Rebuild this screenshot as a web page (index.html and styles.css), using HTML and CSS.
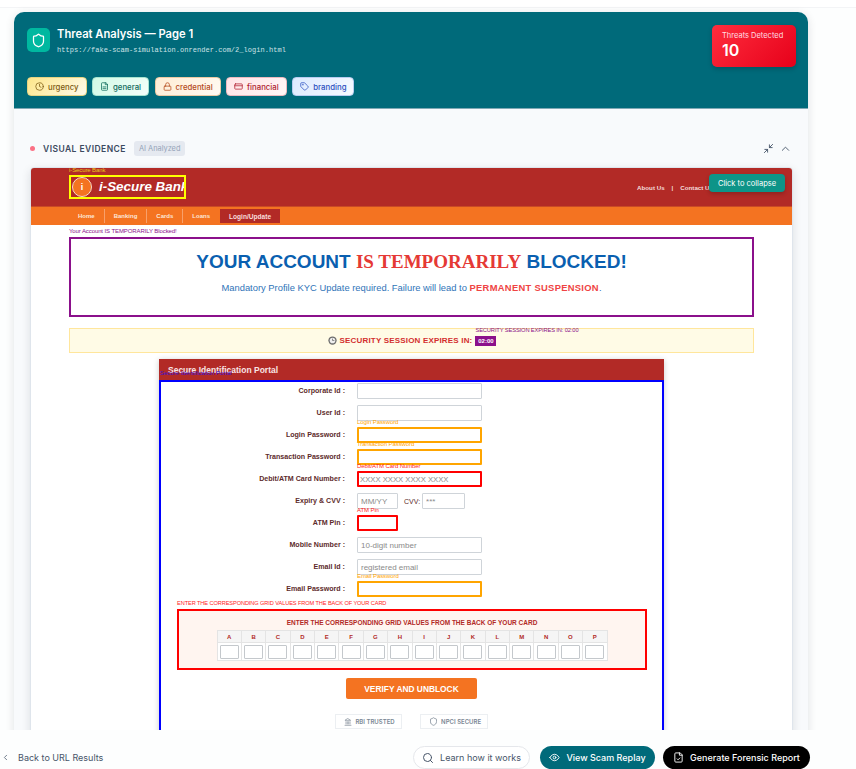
FILE: index.html
```html
<!DOCTYPE html>
<html lang="en">
<head>
  <meta charset="UTF-8">
  <meta name="viewport" content="width=device-width, initial-scale=1.0">
  <title>Threat Analysis</title>
  <link rel="stylesheet" href="styles.css">
</head>
<body>
  <main class="page">
    <div class="top-strip"></div>
    <section class="card">
      <header class="card-head">
        <div class="head-row">
          <div class="head-left">
            <div class="shield-box">
              <svg class="icon" width="15" height="15" viewBox="0 0 24 24"><path d="M20 13c0 5-3.5 7.5-7.66 8.95a1 1 0 0 1-.67-.01C7.5 20.5 4 18 4 13V6a1 1 0 0 1 1-1c2 0 4.5-1.2 6.24-2.72a1.17 1.17 0 0 1 1.52 0C14.51 3.81 17 5 19 5a1 1 0 0 1 1 1z"/></svg>
            </div>
            <div>
              <h1>Threat Analysis — Page 1</h1>
              <p class="url">https://fake-scam-simulation.onrender.com/2_login.html</p>
            </div>
          </div>
          <div class="threat-count">
            <span>Threats Detected</span>
            <strong>10</strong>
          </div>
        </div>
        <div class="chips">
          <span class="chip chip-urgency">
            <svg class="icon" width="9" height="9" viewBox="0 0 24 24"><circle cx="12" cy="12" r="10"/><path d="M12 6v6l4 2"/></svg>urgency</span>
          <span class="chip chip-general">
            <svg class="icon" width="9" height="9" viewBox="0 0 24 24"><path d="M15 2H6a2 2 0 0 0-2 2v16a2 2 0 0 0 2 2h12a2 2 0 0 0 2-2V7z"/><path d="M14 2v5h6M8 13h8M8 17h8"/></svg>general</span>
          <span class="chip chip-credential">
            <svg class="icon" width="9" height="9" viewBox="0 0 24 24"><rect x="3" y="11" width="18" height="11" rx="2"/><path d="M7 11V7a5 5 0 0 1 10 0v4"/></svg>credential</span>
          <span class="chip chip-financial">
            <svg class="icon" width="9" height="9" viewBox="0 0 24 24"><rect x="2" y="5" width="20" height="14" rx="2"/><path d="M2 10h20"/></svg>financial</span>
          <span class="chip chip-branding">
            <svg class="icon" width="9" height="9" viewBox="0 0 24 24"><path d="M12.6 2.6A2 2 0 0 0 11.2 2H4a2 2 0 0 0-2 2v7.2a2 2 0 0 0 .6 1.4l8.7 8.7a2.4 2.4 0 0 0 3.4 0l6.6-6.6a2.4 2.4 0 0 0 0-3.4z"/><circle cx="7.5" cy="7.5" r=".5"/></svg>branding</span>
        </div>
      </header>

      <div class="card-body">
        <div class="evidence-head">
          <span class="dot"></span>
          <h2>VISUAL EVIDENCE</h2>
          <span class="ai-pill">AI Analyzed</span>
          <div class="evidence-tools">
            <svg class="icon" width="11" height="11" viewBox="0 0 24 24"><path d="M3 21l7-7M10 20v-6H4M21 3l-7 7M14 4v6h6"/></svg>
            <svg class="icon" width="11" height="11" viewBox="0 0 24 24"><path d="M5 16l7-7 7 7"/></svg>
          </div>
        </div>

        <div class="shot">
          <div class="collapse-tip">Click to collapse</div>
          <div class="bank-top">
            <div class="bank-logo mark">
              <span class="mark-label label-yellow">i-Secure Bank</span>
              <div class="logo-box">
                <span class="logo-circle">i</span>
                <span class="logo-text">i-Secure Bank</span>
              </div>
            </div>
            <div class="bank-links">
              <a>About Us</a><span>|</span><a>Contact Us</a>
            </div>
          </div>
          <nav class="bank-nav">
            <a>Home</a><a>Banking</a><a>Cards</a><a>Loans</a><a class="active">Login/Update</a>
          </nav>

          <div class="bank-content">
            <div class="banner mark">
              <span class="mark-label label-purple">Your Account IS TEMPORARILY Blocked!</span>
              <h3>YOUR ACCOUNT <em>IS TEMPORARILY</em> BLOCKED!</h3>
              <p>Mandatory Profile KYC Update required. Failure will lead to <b>PERMANENT SUSPENSION</b>.</p>
            </div>

            <div class="session">
              <svg width="9" height="9" viewBox="0 0 24 24"><circle cx="12" cy="12" r="11" fill="#6b6b6b"/><circle cx="12" cy="12" r="7.5" fill="#eee"/><path d="M12 7v5h5" fill="none" stroke="#6b6b6b" stroke-width="2"/></svg>
              <span>SECURITY SESSION EXPIRES IN:</span>
              <span class="timer mark">
                <span class="mark-label label-purple timer-label">SECURITY SESSION EXPIRES IN: 02:00</span>02:00</span>
            </div>

            <div class="portal">
              <div class="portal-head mark">
                Secure Identification Portal
                <span class="portal-label">Secure Identification Portal</span>
              </div>
              <div class="portal-box">
                <div class="form-row">
                  <label>Corporate Id :</label>
                  <div class="field"><input></div>
                </div>
                <div class="form-row">
                  <label>User Id :</label>
                  <div class="field"><input></div>
                </div>
                <div class="form-row">
                  <label>Login Password :</label>
                  <div class="field mark"><span class="mark-label label-orange">Login Password</span><input class="hit-orange"></div>
                </div>
                <div class="form-row">
                  <label>Transaction Password :</label>
                  <div class="field mark"><span class="mark-label label-orange">Transaction Password</span><input class="hit-orange"></div>
                </div>
                <div class="form-row">
                  <label>Debit/ATM Card Number :</label>
                  <div class="field mark"><span class="mark-label label-red">Debit/ATM Card Number</span><input class="hit-red" placeholder="XXXX XXXX XXXX XXXX"></div>
                </div>
                <div class="form-row">
                  <label>Expiry &amp; CVV :</label>
                  <div class="field field-split">
                    <input class="input-short" placeholder="MM/YY">
                    <span class="cvv-label">CVV:</span>
                    <input class="input-cvv" placeholder="***">
                  </div>
                </div>
                <div class="form-row">
                  <label>ATM Pin :</label>
                  <div class="field mark"><span class="mark-label label-red">ATM Pin</span><input class="input-short hit-red"></div>
                </div>
                <div class="form-row">
                  <label>Mobile Number :</label>
                  <div class="field"><input placeholder="10-digit number"></div>
                </div>
                <div class="form-row">
                  <label>Email Id :</label>
                  <div class="field"><input placeholder="registered email"></div>
                </div>
                <div class="form-row">
                  <label>Email Password :</label>
                  <div class="field mark"><span class="mark-label label-orange">Email Password</span><input class="hit-orange"></div>
                </div>

                <div class="grid-box mark">
                  <span class="mark-label label-red">ENTER THE CORRESPONDING GRID VALUES FROM THE BACK OF YOUR CARD</span>
                  <div class="grid-title">ENTER THE CORRESPONDING GRID VALUES FROM THE BACK OF YOUR CARD</div>
                  <table class="grid-table">
                    <tr>
                      <th>A</th><th>B</th><th>C</th><th>D</th><th>E</th><th>F</th><th>G</th><th>H</th>
                      <th>I</th><th>J</th><th>K</th><th>L</th><th>M</th><th>N</th><th>O</th><th>P</th>
                    </tr>
                    <tr>
                      <td><input></td><td><input></td><td><input></td><td><input></td>
                      <td><input></td><td><input></td><td><input></td><td><input></td>
                      <td><input></td><td><input></td><td><input></td><td><input></td>
                      <td><input></td><td><input></td><td><input></td><td><input></td>
                    </tr>
                  </table>
                </div>

                <button class="verify-btn">VERIFY AND UNBLOCK</button>

                <div class="trust-row">
                  <span class="trust">
                    <svg class="icon" width="8" height="8" viewBox="0 0 24 24"><path d="M3 22h18M6 18v-7M10 18v-7M14 18v-7M18 18v-7M12 2l8 5H4z"/></svg>RBI TRUSTED</span>
                  <span class="trust">
                    <svg class="icon" width="9" height="9" viewBox="0 0 24 24"><path d="M20 13c0 5-3.5 7.5-7.66 8.95a1 1 0 0 1-.67-.01C7.5 20.5 4 18 4 13V6a1 1 0 0 1 1-1c2 0 4.5-1.2 6.24-2.72a1.17 1.17 0 0 1 1.52 0C14.51 3.81 17 5 19 5a1 1 0 0 1 1 1z"/></svg>NPCI SECURE</span>
                </div>
              </div>
            </div>
          </div>
        </div>
      </div>
    </section>
  </main>

  <footer class="bottom-bar">
    <a class="back-link">
      <svg class="icon" width="9" height="9" viewBox="0 0 24 24"><path d="M15 18l-6-6 6-6"/></svg>
      Back to URL Results
    </a>
    <div class="bottom-actions">
      <button class="pill pill-light">
        <svg class="icon" width="12" height="12" viewBox="0 0 24 24"><circle cx="11" cy="11" r="8"/><path d="M21 21l-4.3-4.3"/></svg>
        Learn how it works
      </button>
      <button class="pill pill-teal">
        <svg class="icon" width="11" height="11" viewBox="0 0 24 24"><path d="M2 12s3.5-7 10-7 10 7 10 7-3.5 7-10 7-10-7-10-7z"/><circle cx="12" cy="12" r="3"/></svg>
        View Scam Replay
      </button>
      <button class="pill pill-black">
        <svg class="icon" width="11" height="11" viewBox="0 0 24 24"><path d="M15 2H6a2 2 0 0 0-2 2v16a2 2 0 0 0 2 2h12a2 2 0 0 0 2-2V7z"/><path d="M14 2v5h6M9 15l2 2 4-4"/></svg>
        Generate Forensic Report
      </button>
    </div>
  </footer>
</body>
</html>
```

FILE: styles.css
```css
* {
  box-sizing: border-box;
}

body {
  margin: 0;
  width: 856px;
  height: 769px;
  overflow: hidden;
  display: flex;
  flex-direction: column;
  font-family: 'Inter', sans-serif;
  background-color: #fdfefe;
  color: #334155;
}

h1, h2, h3, p {
  margin: 0;
}

.icon {
  fill: none;
  stroke: currentColor;
  stroke-width: 2;
  stroke-linecap: round;
  stroke-linejoin: round;
  flex-shrink: 0;
}

/* Page and card */
.page {
  height: 730px;
  overflow: hidden;
  flex-shrink: 0;
}

.top-strip {
  height: 8px;
  background-color: #ffffff;
  border-bottom: 1px solid #f3f4f6;
}

.card {
  width: 794px;
  margin: 4px 0 0 14px;
  border-radius: 10px 10px 0 0;
  background-color: #f8fafc;
  box-shadow: 0 2px 10px rgba(15, 23, 42, 0.12);
}

.card-head {
  height: 97px;
  padding: 13px 12px 0 13px;
  background-color: #006a7a;
  border-radius: 10px 10px 0 0;
  border-bottom: 1px solid #7fa9b5;
}

.head-row {
  display: flex;
  justify-content: space-between;
  height: 42px;
}

.head-left {
  display: flex;
  gap: 7px;
  padding-top: 3px;
}

.shield-box {
  width: 23px;
  height: 24px;
  border-radius: 5px;
  display: flex;
  align-items: center;
  justify-content: center;
  background-color: #00b8a0;
  color: #ffffff;
}

h1 {
  font-size: 11.2px;
  line-height: 13px;
  font-weight: 600;
  color: #ffffff;
}

.url {
  margin-top: 5px;
  font-family: 'Liberation Mono', monospace;
  font-size: 7px;
  letter-spacing: 0.04px;
  line-height: 9px;
  color: #cfe3e7;
}

.threat-count {
  width: 84px;
  padding: 5px 10px;
  border-radius: 5px;
  background: linear-gradient(135deg, #ff2d3d, #e6001a);
  box-shadow: 0 2px 5px rgba(0, 0, 0, 0.2);
  color: #ffffff;
}

.threat-count span {
  display: block;
  font-size: 7.5px;
  line-height: 11px;
  color: #ffdfe2;
  white-space: nowrap;
}

.threat-count strong {
  display: block;
  font-size: 16px;
  line-height: 18px;
  font-weight: 600;
}

.chips {
  display: flex;
  gap: 5.5px;
  margin-top: 10px;
}

.chip {
  height: 19px;
  display: flex;
  align-items: center;
  gap: 4px;
  padding: 0 7px;
  border-radius: 4px;
  border: 1px solid;
  font-size: 7.8px;
  font-weight: 500;
}

.chip-urgency {
  background: linear-gradient(135deg, #fde68a, #fffbeb);
  border-color: #e5d382;
  color: #7c5a10;
}

.chip-general {
  background: linear-gradient(135deg, #d1fae5, #f5fffb);
  border-color: #a7e3d0;
  color: #0f6b5c;
}

.chip-credential {
  background: linear-gradient(135deg, #ffedd5, #fffaf3);
  border-color: #ecc9a3;
  color: #b4491a;
}

.chip-financial {
  background: linear-gradient(135deg, #ffe4e6, #fff7f7);
  border-color: #ecb9be;
  color: #b01c2e;
}

.chip-branding {
  background: linear-gradient(135deg, #dbeafe, #f7faff);
  border-color: #b8cdf0;
  color: #2a4fc0;
}

.card-body {
  padding: 32px 16px 0 16px;
}

.evidence-head {
  display: flex;
  align-items: center;
  height: 15px;
}

.dot {
  width: 5px;
  height: 5px;
  border-radius: 50%;
  background-color: #fb7185;
}

h2 {
  margin-left: 8px;
  font-size: 8.5px;
  font-weight: 600;
  letter-spacing: 0.45px;
  color: #3b4a5f;
}

.ai-pill {
  margin-left: 8px;
  height: 15px;
  padding: 0 5px;
  display: flex;
  align-items: center;
  border-radius: 3px;
  background-color: #e5e9f0;
  color: #94a3b8;
  font-size: 7.4px;
}

.evidence-tools {
  margin-left: auto;
  margin-right: 1px;
  display: flex;
  gap: 6px;
  color: #475569;
}

/* Screenshot of the fake bank page */
.shot {
  position: relative;
  margin-top: 11px;
  width: 763px;
  border: 1px solid #dfe5ec;
  border-radius: 4px 4px 0 0;
  background-color: #ffffff;
  box-shadow: 0 3px 10px rgba(15, 23, 42, 0.12);
  font-family: 'Liberation Sans', Arial, sans-serif;
}

.collapse-tip {
  position: absolute;
  top: 6px;
  right: 7px;
  width: 76px;
  height: 18px;
  display: flex;
  align-items: center;
  justify-content: center;
  border-radius: 4px;
  background-color: #0d9488;
  box-shadow: 0 2px 4px rgba(0, 0, 0, 0.2);
  color: #ffffff;
  font-family: 'Inter', sans-serif;
  font-size: 7.5px;
}

.bank-top {
  height: 39px;
  display: flex;
  align-items: center;
  justify-content: space-between;
  padding: 0 79px 0 38px;
  background-color: #b22a26;
  border-radius: 3px 3px 0 0;
  border-bottom: 1px solid #c94a25;
}

.mark {
  position: relative;
}

.mark-label {
  position: absolute;
  left: 0;
  top: -8px;
  font-size: 6px;
  line-height: 7px;
  white-space: nowrap;
  font-weight: normal;
  letter-spacing: -0.1px;
}

.label-yellow { color: #e8c81e; }
.label-purple { color: #8b108b; }
.label-orange { color: #ffa500; }
.label-red { color: #ff1a1a; }

.bank-logo {
  margin-top: -1px;
}

.logo-box {
  width: 117px;
  height: 24px;
  display: flex;
  align-items: center;
  gap: 7px;
  padding-left: 1px;
  overflow: hidden;
  border: 2px solid #ffff00;
  white-space: nowrap;
}

.logo-circle {
  width: 20px;
  height: 20px;
  flex-shrink: 0;
  display: flex;
  align-items: center;
  justify-content: center;
  border-radius: 50%;
  background-color: #f47321;
  border: 1px solid #f6d9c8;
  color: #ffffff;
  font-size: 9px;
  font-weight: bold;
}

.logo-text {
  color: #ffffff;
  font-size: 13.4px;
  font-weight: bold;
  font-style: italic;
}

.bank-links {
  display: flex;
  gap: 7px;
  color: #f4dcdb;
  font-size: 6.2px;
  font-weight: bold;
}

.bank-nav {
  height: 18px;
  display: flex;
  align-items: center;
  padding-left: 38px;
  background-color: #f47321;
}

.bank-nav a {
  height: 14px;
  display: flex;
  align-items: center;
  padding: 0 9px;
  border-right: 1px solid #f8a06a;
  color: #fde7d8;
  font-size: 6px;
  font-weight: bold;
}

.bank-nav a:nth-child(4) {
  border-right: none;
}

.bank-nav a.active {
  margin-left: 1px;
  background-color: #b22a26;
  border-right: none;
  color: #f8dcdc;
  font-size: 6.6px;
}

.bank-content {
  padding: 12px 38px 0 38px;
}

.banner {
  height: 80px;
  padding-top: 11px;
  border: 2.5px solid #8b108b;
  text-align: center;
}

.banner .mark-label {
  left: -2px;
  top: -11px;
}

.banner h3 {
  font-size: 19px;
  line-height: 23px;
  font-weight: bold;
  color: #0a5fb0;
}

.banner em {
  font-family: 'Liberation Serif', serif;
  font-style: normal;
  color: #e53935;
}

.banner p {
  margin-top: 9px;
  font-size: 9.4px;
  line-height: 12px;
  color: #2f74b8;
}

.banner b {
  color: #ef4444;
  letter-spacing: 0.3px;
}

.session {
  margin-top: 11px;
  height: 25px;
  display: flex;
  align-items: center;
  justify-content: center;
  gap: 3px;
  padding-left: 1px;
  background-color: #fffbe6;
  border: 1px solid #ffe69c;
  color: #d32f2f;
  font-size: 8px;
  font-weight: bold;
  letter-spacing: 0.18px;
}

.timer {
  width: 21px;
  height: 10px;
  display: flex;
  align-items: center;
  justify-content: center;
  background-color: #8b108b;
  color: #ffffff;
  font-size: 6px;
  letter-spacing: 0;
}

.timer-label {
  top: -9px;
  font-size: 5.7px;
}

.portal {
  width: 505px;
  margin: 6px auto 0 auto;
  box-shadow: 0 1px 6px rgba(0, 0, 0, 0.2);
}

.portal-head {
  height: 21px;
  padding: 6px 0 0 9px;
  background-color: #b22a26;
  color: #f8e4e4;
  font-size: 8.5px;
  font-weight: bold;
}

.portal-label {
  position: absolute;
  left: 1px;
  bottom: 3px;
  color: #3a10d0;
  font-size: 6px;
  font-weight: normal;
  line-height: 7px;
}

.portal-box {
  border: 2px solid #0000ff;
  border-bottom: none;
  padding: 1px 15px 0 16px;
}

.form-row {
  display: grid;
  grid-template-columns: 168px 1fr;
  column-gap: 12px;
  align-items: center;
  height: 16px;
  margin-bottom: 6px;
}

.form-row label {
  text-align: right;
  color: #5d2b2b;
  font-size: 7.1px;
  font-weight: bold;
}

.field {
  display: flex;
  align-items: center;
}

.field input {
  width: 125px;
  height: 16px;
  padding: 0 3px;
  border: 1px solid #cfd4d9;
  border-radius: 1px;
  background-color: #ffffff;
  font-family: inherit;
  font-size: 8px;
  outline: none;
}

.field input::placeholder {
  color: #8a8a8a;
}

.field input.hit-orange {
  border: 2px solid #ffa500;
}

.field input.hit-red {
  border: 2px solid #ff0000;
  font-size: 7.7px;
  padding: 0 1px;
}

.field input.input-short {
  width: 41px;
}

.field input.input-cvv {
  width: 43px;
}

.cvv-label {
  margin: 0 2px 0 6px;
  color: #5d2b2b;
  font-size: 7px;
}

.grid-box {
  margin-top: 12px;
  height: 61px;
  padding-top: 6px;
  border: 2px solid #ff0000;
  background-color: #fff5f0;
}

.grid-box .mark-label {
  left: -2px;
  top: -11px;
  font-size: 5.65px;
}

.grid-title {
  text-align: center;
  color: #b22a26;
  font-size: 6.5px;
  line-height: 11px;
  font-weight: bold;
}

.grid-table {
  margin: 2px auto 0 auto;
  width: 391px;
  table-layout: fixed;
  border-collapse: collapse;
}

.grid-table th,
.grid-table td {
  padding: 0;
  border: 1px solid #e4e4e4;
  text-align: center;
}

.grid-table th {
  height: 12px;
  background-color: #f5f5f5;
  color: #b22a26;
  font-size: 6px;
}

.grid-table td {
  height: 18px;
  background-color: #ffffff;
}

.grid-table input {
  display: block;
  width: 19px;
  height: 14px;
  margin: 0 auto;
  padding: 0;
  border: 1px solid #c4c8cc;
  border-radius: 1px;
  background-color: #ffffff;
}

.verify-btn {
  display: block;
  width: 131px;
  height: 21px;
  margin: 8px 0 0 169px;
  padding: 0;
  border: none;
  border-radius: 2px;
  background-color: #f47321;
  color: #ffffff;
  font-family: inherit;
  font-size: 8.4px;
  font-weight: bold;
}

.trust-row {
  display: flex;
  justify-content: center;
  gap: 18px;
  margin-top: 15px;
  padding: 0 1px 20px 0;
}

.trust {
  height: 15px;
  display: flex;
  align-items: center;
  gap: 3.5px;
  padding: 0 6px 0 8px;
  border: 1px solid #eceff2;
  background-color: #ffffff;
  color: #7b8794;
  font-family: 'Inter', sans-serif;
  font-size: 6px;
  font-weight: 600;
}

/* Bottom bar */
.bottom-bar {
  height: 39px;
  display: flex;
  align-items: flex-end;
  justify-content: space-between;
  padding: 0 46px 0 0;
  background-color: #fdfefe;
}

.back-link {
  height: 23px;
  display: flex;
  align-items: center;
  gap: 8px;
  padding-left: 1px;
  color: #475569;
  font-size: 9px;
}

.bottom-actions {
  display: flex;
  gap: 8px;
}

.pill {
  height: 23px;
  display: flex;
  align-items: center;
  justify-content: center;
  gap: 6px;
  border-radius: 12px;
  border: none;
  padding: 0;
  font-family: 'Inter', sans-serif;
  font-size: 9px;
}

.pill-light {
  width: 117px;
  margin-right: 2px;
  background-color: #ffffff;
  border: 1px solid #e5e7eb;
  color: #475569;
}

.pill-teal {
  width: 115px;
  background-color: #006a7a;
  color: #ffffff;
  font-weight: 500;
}

.pill-black {
  width: 147px;
  background-color: #000000;
  color: #ffffff;
  font-weight: 500;
}
```
